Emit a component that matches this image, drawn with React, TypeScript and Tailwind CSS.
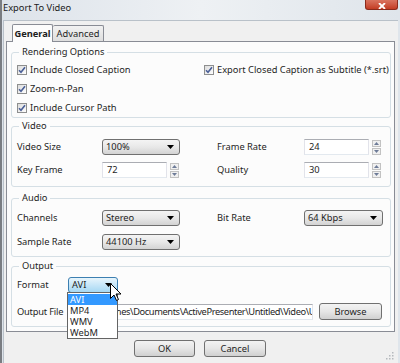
import type { ReactNode } from 'react';

const font = { fontFamily: '"Noto Sans", "Open Sans", "DejaVu Sans", sans-serif' };

function Check({ label }: { label: string }) {
  return (
    <div className="flex items-center h-[18px] gap-[3px] whitespace-nowrap">
      <span className="w-[10px] h-[10px] shrink-0 border border-[#8e8f8f] bg-gradient-to-br from-[#dcdcdc] to-[#fefefe] flex items-center justify-center">
        <svg width="8" height="8" viewBox="0 0 8 8">
          <path d="M1 4.2 L3 6.3 L7 1.2" fill="none" stroke="#4a5f97" strokeWidth="1.6" />
        </svg>
      </span>
      <span>{label}</span>
    </div>
  );
}

function Arrow() {
  return (
    <svg width="7" height="4" viewBox="0 0 7 4">
      <path d="M0 0 H7 L3.5 4 Z" fill="#000" />
    </svg>
  );
}

function Select({ value, w, hot }: { value: string; w: string; hot?: boolean }) {
  return (
    <div
      className={`${w} h-[16px] shrink-0 rounded-[3px] border flex items-center justify-between pl-[3px] pr-[5px] ${
        hot
          ? 'border-[#3c7fb1] bg-gradient-to-b from-[#e8f5fc] via-[#c7e6f8] to-[#a6d8f3]'
          : 'border-[#707070] bg-gradient-to-b from-[#f4f4f4] via-[#e8e8e8] to-[#d3d3d3]'
      }`}
    >
      <span>{value}</span>
      <Arrow />
    </div>
  );
}

function Spin({ value }: { value: string }) {
  return (
    <div className="flex items-center gap-[3px] shrink-0">
      <div className="w-[65px] h-[16px] bg-white border border-[#abadb3] border-b-[#e3e9ef] border-x-[#e2e3ea] flex items-center pl-[4px]">
        {value}
      </div>
      <div className="flex flex-col gap-[1px]">
        {[0, 1].map((i) => (
          <div key={i} className="w-[9px] h-[7px] border border-[#c2c2c2] bg-[#f0f0f0] flex items-center justify-center">
            <svg width="5" height="3" viewBox="0 0 5 3">
              <path d={i === 0 ? 'M0 3 H5 L2.5 0 Z' : 'M0 0 H5 L2.5 3 Z'} fill="#6d7b97" />
            </svg>
          </div>
        ))}
      </div>
    </div>
  );
}

function Group({ title, children, className = '' }: { title: string; children: ReactNode; className?: string }) {
  return (
    <fieldset className={`min-w-0 border border-[#d5dfe5] rounded-[3px] pl-[5px] pr-[5px] ${className}`}>
      <legend className="ml-[2px] px-[3px] leading-[14px] text-[#1e1e1e]">{title}</legend>
      {children}
    </fieldset>
  );
}

function Row({ children }: { children: ReactNode }) {
  return <div className="flex items-center h-[16px] whitespace-nowrap">{children}</div>;
}

function Btn({ label, w }: { label: string; w: string }) {
  return (
    <div className={`${w} h-[17px] shrink-0 rounded-[3px] border border-[#707070] bg-gradient-to-b from-[#f3f3f3] via-[#e6e6e6] to-[#d0d0d0] flex items-center justify-center`}>
      {label}
    </div>
  );
}

export default function App() {
  return (
    <div
      className="w-[400px] h-[363px] overflow-hidden flex flex-col text-[9.3px] text-[#1e1e1e] bg-gradient-to-r from-[#dde3ea] via-[#eef1f4] to-[#dfe5eb] border-l-2 border-[#7a7d82]"
      style={font}
    >
      {/* title bar */}
      <div className="h-[20px] flex justify-between items-start shrink-0">
        <span className="pl-[1px] pt-[1px] leading-[14px] text-[#1a1a1a]">Export To Video</span>
        <div className="w-[33px] h-[10px] mr-[2px] rounded-b-[3px] border border-t-0 border-[#8a2b1c] bg-gradient-to-b from-[#d9735f] to-[#c33c22] flex items-end justify-center">
          <svg width="8" height="6" viewBox="0 0 8 6">
            <path d="M1 0 L7 6 M7 0 L1 6" stroke="#fff" strokeWidth="1.8" />
          </svg>
        </div>
      </div>

      {/* client area */}
      <div className="flex-1 min-w-0 mx-[1px] mr-[2px] bg-[#f0f0f0] border-t border-l border-[#b9c1c9] flex flex-col pl-[2px] pr-[3px]">
        {/* tabs */}
        <div className="flex items-end h-[20px] pl-[6px] shrink-0">
          <div className="h-[18px] w-[41px] bg-[#fcfcfc] border border-b-0 border-[#898c95] rounded-t-[2px] flex items-center justify-center font-bold relative top-[1px] z-10">
            General
          </div>
          <div className="h-[16px] w-[51px] bg-gradient-to-b from-[#f2f2f2] to-[#dedede] border border-b-0 border-l-0 border-[#898c95] rounded-t-[2px] flex items-center justify-center">
            Advanced
          </div>
        </div>

        {/* tab panel */}
        <div className="h-[291px] min-w-0 bg-[#fcfcfc] border border-[#898c95] pl-[4px] pr-[3px] pt-[3px] shrink-0">
          <Group title="Rendering Options" className="pt-[2px]">
            <div className="flex">
              <div className="w-[187px] shrink-0 flex flex-col gap-[1px]">
                <Check label="Include Closed Caption" />
                <Check label="Zoom-n-Pan" />
                <Check label="Include Cursor Path" />
              </div>
              <Check label="Export Closed Caption as Subtitle (*.srt)" />
            </div>
          </Group>

          <Group title="Video" className="mt-[1px] pt-[6px] pb-[8px]">
            <div className="flex flex-col gap-[7px]">
              <Row>
                <span className="w-[85px] shrink-0">Video Size</span>
                <Select value="100%" w="w-[78px]" />
                <span className="ml-[37px] w-[87px] shrink-0">Frame Rate</span>
                <Spin value="24" />
              </Row>
              <Row>
                <span className="w-[85px] shrink-0">Key Frame</span>
                <Spin value="72" />
                <span className="ml-[38px] w-[87px] shrink-0">Quality</span>
                <Spin value="30" />
              </Row>
            </div>
          </Group>

          <Group title="Audio" className="mt-[4px] pt-[5px] pb-[6px]">
            <div className="flex flex-col gap-[8px]">
              <Row>
                <span className="w-[85px] shrink-0">Channels</span>
                <Select value="Stereo" w="w-[78px]" />
                <span className="ml-[37px] w-[87px] shrink-0">Bit Rate</span>
                <Select value="64 Kbps" w="w-[79px]" />
              </Row>
              <Row>
                <span className="w-[85px] shrink-0">Sample Rate</span>
                <Select value="44100 Hz" w="w-[78px]" />
              </Row>
            </div>
          </Group>

          <Group title="Output" className="mt-[2px] pt-[4px] pb-[6px]">
            <div className="flex flex-col gap-[10px]">
              <Row>
                <span className="w-[51px] shrink-0">Format</span>
                <div className="relative z-20">
                  <Select value="AVI" w="w-[50px]" hot />
                  <div className="absolute left-[-1px] top-[15px] w-[51px] bg-white border border-[#646464] pt-[1px]">
                    {['AVI', 'MP4', 'WMV', 'WebM'].map((f, i) => (
                      <div
                        key={f}
                        className={`h-[11px] leading-[11px] pl-[2px] ${i === 0 ? 'bg-[#3399ff] text-white' : ''}`}
                      >
                        {f}
                      </div>
                    ))}
                  </div>
                  <svg className="absolute left-[42px] top-[6px]" width="12" height="19" viewBox="0 0 12 19">
                    <path d="M0.5 0.5 L0.5 15.5 L4 12 L6.5 17.5 L8.5 16.5 L6 11 L11 11 Z" fill="#fff" stroke="#000" strokeWidth="1" />
                  </svg>
                </div>
              </Row>
              <div className="flex items-center h-[17px] whitespace-nowrap">
                <span className="w-[51px] shrink-0 tracking-[-0.2px]">Output File</span>
                <div className="w-[245px] shrink-0 h-[16px] bg-white border border-[#abadb3] border-b-[#e3e9ef] border-x-[#e2e3ea] flex items-center pl-[3px] overflow-hidden tracking-[-0.4px]">
                  C:\Users\Jones\Documents\ActivePresenter\Untitled\Video\Untitled.avi
                </div>
                <div className="ml-[6px]">
                  <Btn label="Browse" w="w-[63px]" />
                </div>
              </div>
            </div>
          </Group>
        </div>

        {/* buttons */}
        <div className="flex gap-[9px] pt-[8px] pl-[128px]">
          <Btn label="OK" w="w-[61px]" />
          <Btn label="Cancel" w="w-[62px]" />
          <svg className="ml-auto mt-[12px] mr-[1px]" width="8" height="8" viewBox="0 0 8 8">
            <g fill="#b5b9bd">
              <rect x="6" y="0" width="1.5" height="1.5" />
              <rect x="3" y="3" width="1.5" height="1.5" />
              <rect x="6" y="3" width="1.5" height="1.5" />
              <rect x="0" y="6" width="1.5" height="1.5" />
              <rect x="3" y="6" width="1.5" height="1.5" />
              <rect x="6" y="6" width="1.5" height="1.5" />
            </g>
          </svg>
        </div>
      </div>
    </div>
  );
}
